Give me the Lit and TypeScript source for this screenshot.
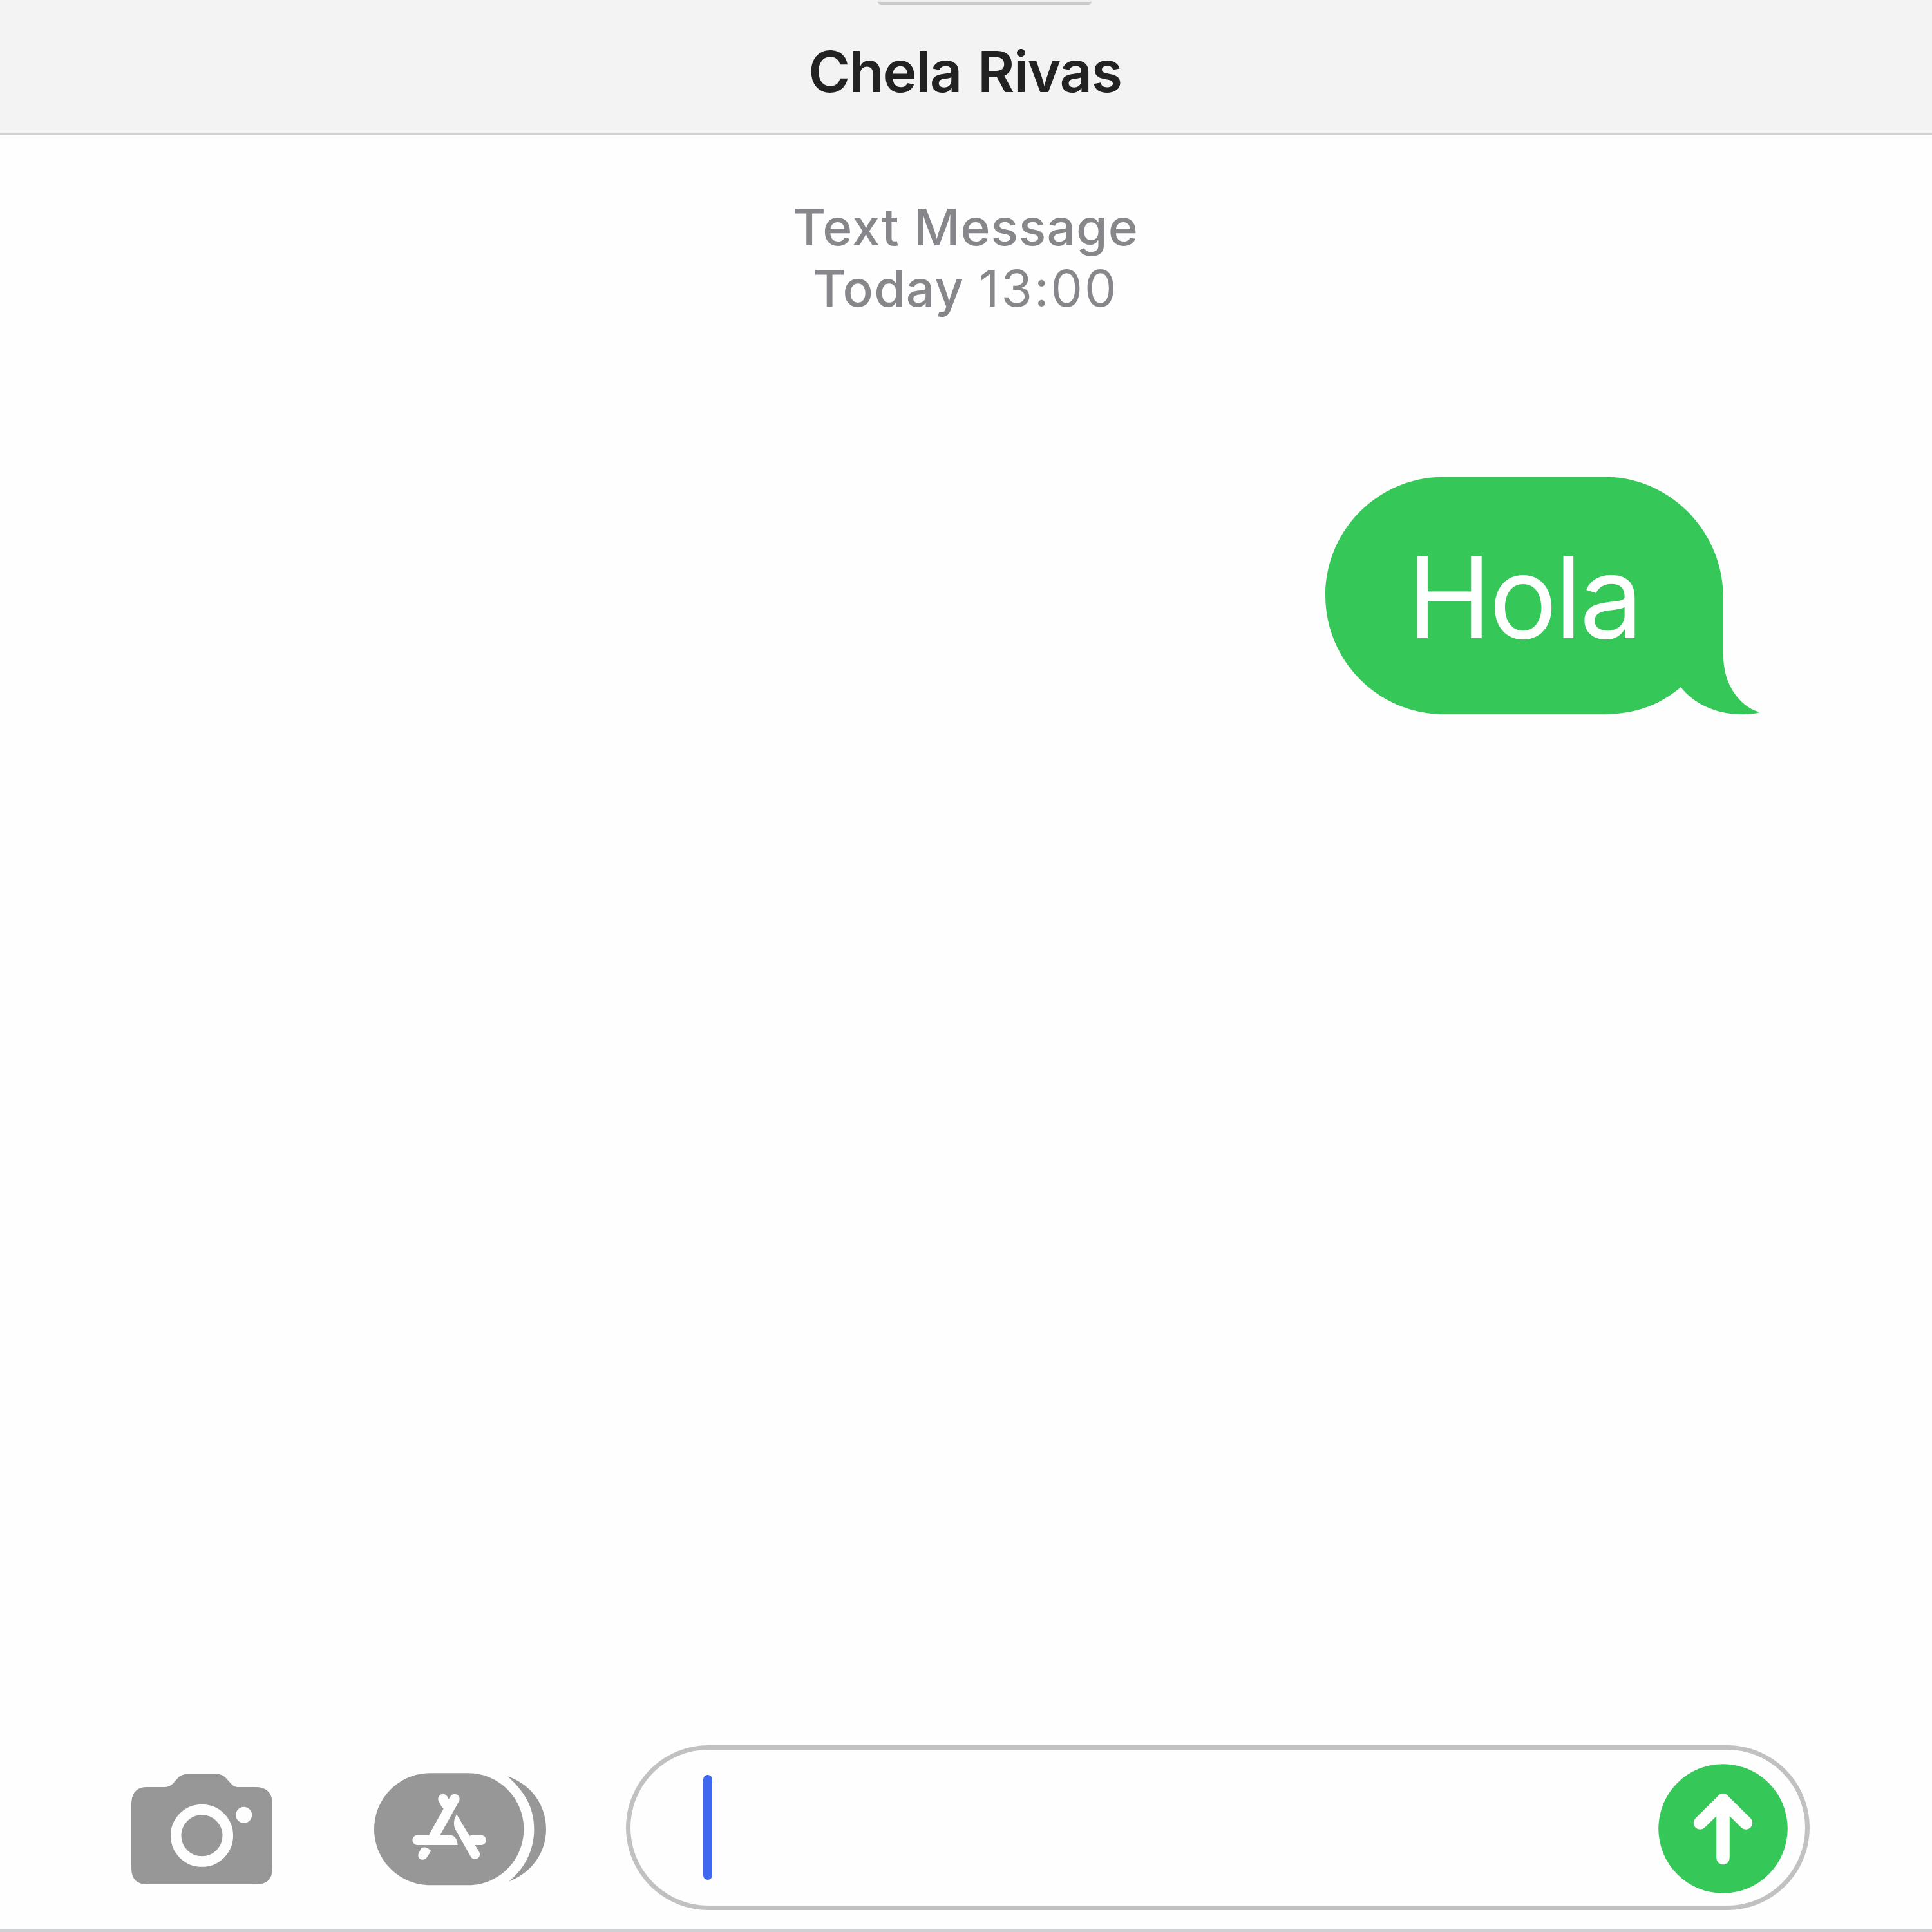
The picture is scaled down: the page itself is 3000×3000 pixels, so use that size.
import { LitElement, html, css } from "lit";
import { customElement, property } from "lit/decorators.js";

@customElement("chat-header")
class ChatHeader extends LitElement {
  @property() name = "";

  static styles = css`
    :host {
      display: flex;
      flex-direction: column;
      align-items: center;
      box-sizing: border-box;
      height: 210px;
      background: #f3f3f3;
      border-bottom: 4px solid #d2d2d2;
    }
    .grabber {
      width: 332px;
      height: 7px;
      box-sizing: border-box;
      margin-left: 58px;
      background: #f1f1f1;
      border-bottom: 4px solid #c8c8c8;
      border-radius: 0 0 5px 5px;
    }
    .name {
      margin: 50px 3px 0 0;
      font-size: 88px;
      line-height: 108px;
      font-weight: 600;
      letter-spacing: -1.3px;
      word-spacing: 4px;
      color: #222;
      white-space: nowrap;
    }
  `;

  render() {
    return html`
      <div class="grabber"></div>
      <h1 class="name">${this.name}</h1>
    `;
  }
}

@customElement("message-bubble")
class MessageBubble extends LitElement {
  @property() text = "";

  static styles = css`
    :host {
      display: block;
      position: relative;
      width: 618px;
      height: 369px;
    }
    .shape {
      position: absolute;
      left: 0;
      top: 0;
      width: 680px;
      height: 369px;
      fill: #35c859;
    }
    .text {
      position: relative;
      padding-left: 127px;
      padding-top: 80px;
      font-size: 176.5px;
      line-height: 214px;
      color: #fff;
      letter-spacing: -4px;
      white-space: nowrap;
    }
  `;

  render() {
    return html`
      <svg class="shape" viewBox="0 0 680 369">
        <path
          d="M184 0.500H434C534 0.500 618 84 618 188V278C618 322 642 356 674 366Q668 369 644 369C608 369 572 353 552 327C520 354 482 369 434 369H184C82 369 0 286 0 184.500C0 83 82 0.500 184 0.500Z"
        />
      </svg>
      <div class="text">${this.text}</div>
    `;
  }
}

@customElement("compose-bar")
class ComposeBar extends LitElement {
  static styles = css`
    :host {
      display: flex;
      align-items: center;
      box-sizing: border-box;
      height: 256px;
      padding: 0 190px 0 200px;
    }
    svg {
      display: block;
      flex: none;
    }
    .camera {
      width: 228px;
      height: 180px;
      margin-top: 3px;
    }
    .apps {
      width: 276px;
      height: 180px;
      margin-left: 150px;
      margin-top: 4px;
    }
    .field {
      display: flex;
      align-items: center;
      justify-content: space-between;
      box-sizing: border-box;
      width: 838px;
      height: 256px;
      margin-left: 118px;
      padding: 0 27px 0 113px;
      border: 7px solid #c1c1c2;
      border-radius: 128px;
      flex: 1;
    }
    .caret {
      width: 14px;
      height: 163px;
      margin-top: -2px;
      border-radius: 7px;
      background: #3f68ee;
    }
    .send {
      width: 201px;
      height: 201px;
      margin-top: 3px;
    }
  `;

  render() {
    return html`
      <svg class="camera" viewBox="200 2749 228 180">
        <path
          fill="#979797"
          d="M228 2774H255Q263 2774 268 2769L277 2759Q283 2753.500 292 2753.500H336Q344 2753.500 350 2759L360 2770Q364 2774 370 2774H397Q423 2774 423 2801V2900Q423 2925 398 2925H229Q204 2925 204 2900V2801Q204 2774 228 2774Z"
        />
        <circle cx="313.500" cy="2849.300" r="40.300" fill="none" stroke="#fefefe" stroke-width="16.500" />
        <circle cx="378.700" cy="2817.300" r="12.500" fill="#fefefe" />
      </svg>
      <svg class="apps" viewBox="0 0 828 540">
        <g transform="translate(-54 -60)">
          <path
            fill="#979797"
            d="M324 70H500C645 70 760 187 760 331S645 592 500 592H324C180 592 63 476 63 331S180 70 324 70Z"
          />
          <path fill="#979797" d="M684 85C790 120 864 215 864 331S790 537 690 575C765 515 808 430 808 331S765 155 684 85Z" />
          <g fill="none" stroke="#fefefe" stroke-width="46" stroke-linecap="round">
            <path d="M438 190L342 362M384 190L398 216" />
            <path d="M264 382H412M520 382H562" />
          </g>
          <path
            fill="#fefefe"
            d="M447 262L554 440A23 23 0 0 1 515 463L442 334Q425 300 447 262ZM405 359H420Q448 362 452 405H405ZM283 418Q306 409 328 432L309 462Q298 476 284 473Q264 467 269 446Z"
          />
        </g>
      </svg>
      <div class="field">
        <div class="caret"></div>
        <svg class="send" viewBox="0 0 201 201">
          <circle cx="100.500" cy="100.500" r="100.300" fill="#35c859" />
          <path
            d="M100.500 56V146M65 91.500L100.500 56.500L136 91.500"
            fill="none"
            stroke="#fff"
            stroke-width="20.500"
            stroke-linecap="round"
            stroke-linejoin="round"
          />
        </svg>
      </div>
    `;
  }
}

@customElement("app-root")
class AppRoot extends LitElement {
  static styles = css`
    :host {
      display: flex;
      flex-direction: column;
      box-sizing: border-box;
      width: 3000px;
      height: 3000px;
      overflow: hidden;
      background: #fefefe;
      border-bottom: 4px solid #cfd0d6;
      font-family: Inter, "Liberation Sans", sans-serif;
    }
    .thread {
      flex: 1;
      display: flex;
      flex-direction: column;
      padding: 95px 324px 0 0;
    }
    .stamp {
      margin-right: -323px;
      height: 190px;
      text-align: center;
      font-size: 78.5px;
      line-height: 95px;
      letter-spacing: 1.1px;
      font-weight: 500;
      color: #87878b;
    }
    .time {
      font-weight: 400;
      letter-spacing: 3px;
    }
    .sent {
      align-self: flex-end;
      margin-top: 245px;
    }
    .composer {
      margin-bottom: 30px;
    }
  `;

  render() {
    return html`
      <chat-header name="Chela Rivas"></chat-header>
      <main class="thread">
        <div class="stamp">
          <div>Text Message</div>
          <div>Today <span class="time">13:00</span></div>
        </div>
        <message-bubble class="sent" text="Hola"></message-bubble>
      </main>
      <compose-bar class="composer"></compose-bar>
    `;
  }
}
